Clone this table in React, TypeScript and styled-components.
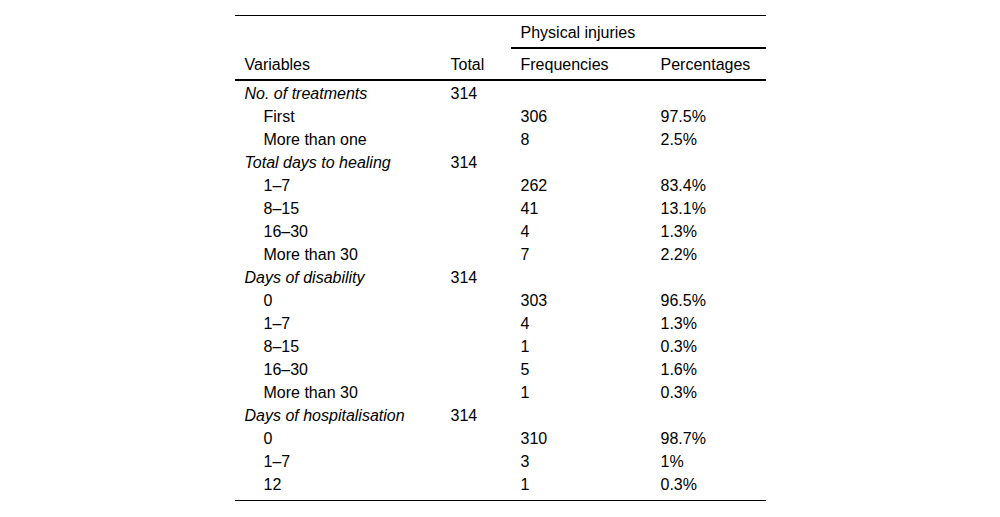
import React from "react";
import styled, { createGlobalStyle } from "styled-components";

const Global = createGlobalStyle`
  html, body { margin: 0; padding: 0; background: #fff; }
  body { font-family: "Liberation Sans", Arial, sans-serif; color: #000; }
`;

const Page = styled.div`
  display: flex;
  justify-content: center;
  padding-top: 15px;
`;

const Table = styled.table`
  width: 531px;
  border-collapse: collapse;
  border-top: 1px solid #000;
  border-bottom: 1px solid #000;
  font-size: 16px;
  line-height: 18px;
  table-layout: fixed;
`;

const HeadCell = styled.th<{ $rule?: boolean }>`
  font-weight: normal;
  text-align: left;
  vertical-align: bottom;
  padding: 0 10px 5px 10px;
  height: 32px;
  box-sizing: border-box;
  border-bottom: ${(p) => (p.$rule ? "2px solid #000" : "none")};
`;

const HeadRow = styled.tr<{ $thick?: boolean }>`
  border-bottom: ${(p) => (p.$thick ? "2px solid #000" : "none")};
`;

const Cell = styled.td<{ $indent?: boolean; $italic?: boolean }>`
  padding: 4px 10px 1px ${(p) => (p.$indent ? "29px" : "10px")};
  font-style: ${(p) => (p.$italic ? "italic" : "normal")};
  white-space: nowrap;
  height: 23px;
  box-sizing: border-box;
`;

const Row = styled.tr<{ $last?: boolean }>`
  & > td {
    height: ${(p) => (p.$last ? "28px" : "23px")};
    padding-bottom: ${(p) => (p.$last ? "6px" : "1px")};
  }
`;

type Item = { label: string; freq: string; pct: string };
type Group = { title: string; total: string; items: Item[] };

const groups: Group[] = [
  {
    title: "No. of treatments",
    total: "314",
    items: [
      { label: "First", freq: "306", pct: "97.5%" },
      { label: "More than one", freq: "8", pct: "2.5%" },
    ],
  },
  {
    title: "Total days to healing",
    total: "314",
    items: [
      { label: "1\u20137", freq: "262", pct: "83.4%" },
      { label: "8\u201315", freq: "41", pct: "13.1%" },
      { label: "16\u201330", freq: "4", pct: "1.3%" },
      { label: "More than 30", freq: "7", pct: "2.2%" },
    ],
  },
  {
    title: "Days of disability",
    total: "314",
    items: [
      { label: "0", freq: "303", pct: "96.5%" },
      { label: "1\u20137", freq: "4", pct: "1.3%" },
      { label: "8\u201315", freq: "1", pct: "0.3%" },
      { label: "16\u201330", freq: "5", pct: "1.6%" },
      { label: "More than 30", freq: "1", pct: "0.3%" },
    ],
  },
  {
    title: "Days of hospitalisation",
    total: "314",
    items: [
      { label: "0", freq: "310", pct: "98.7%" },
      { label: "1\u20137", freq: "3", pct: "1%" },
      { label: "12", freq: "1", pct: "0.3%" },
    ],
  },
];

export default function App() {
  const rows: React.ReactNode[] = [];
  groups.forEach((g, gi) => {
    rows.push(
      <Row key={`g${gi}`}>
        <Cell $italic>{g.title}</Cell>
        <Cell>{g.total}</Cell>
        <Cell />
        <Cell />
      </Row>
    );
    g.items.forEach((it, ii) => {
      const last = gi === groups.length - 1 && ii === g.items.length - 1;
      rows.push(
        <Row key={`g${gi}i${ii}`} $last={last}>
          <Cell $indent>{it.label}</Cell>
          <Cell />
          <Cell>{it.freq}</Cell>
          <Cell>{it.pct}</Cell>
        </Row>
      );
    });
  });

  return (
    <>
      <Global />
      <Page>
        <Table>
          <colgroup>
            <col style={{ width: 206 }} />
            <col style={{ width: 70 }} />
            <col style={{ width: 140 }} />
            <col style={{ width: 115 }} />
          </colgroup>
          <thead>
            <HeadRow>
              <HeadCell />
              <HeadCell />
              <HeadCell colSpan={2} $rule>
                Physical injuries
              </HeadCell>
            </HeadRow>
            <HeadRow $thick>
              <HeadCell>Variables</HeadCell>
              <HeadCell>Total</HeadCell>
              <HeadCell>Frequencies</HeadCell>
              <HeadCell>Percentages</HeadCell>
            </HeadRow>
          </thead>
          <tbody>{rows}</tbody>
        </Table>
      </Page>
    </>
  );
}
